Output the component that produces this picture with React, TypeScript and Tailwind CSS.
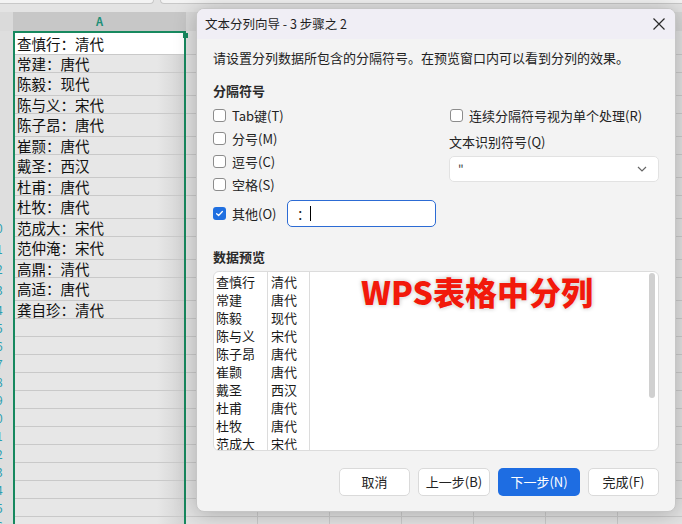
import { ReactNode } from 'react'

const POETS: [string, string][] = [
  ['查慎行', '清代'],
  ['常建', '唐代'],
  ['陈毅', '现代'],
  ['陈与义', '宋代'],
  ['陈子昂', '唐代'],
  ['崔颢', '唐代'],
  ['戴圣', '西汉'],
  ['杜甫', '唐代'],
  ['杜牧', '唐代'],
  ['范成大', '宋代'],
  ['范仲淹', '宋代'],
  ['高鼎', '清代'],
  ['高适', '唐代'],
  ['龚自珍', '清代'],
]

// sheet row heights (first row counts the 2px selection border)
const ROWS: string[] = [
  'h-[24px]',
  'h-[18px]', 'h-[23px]', 'h-[18px]', 'h-[23px]', 'h-[18px]', 'h-[23px]', 'h-[18px]',
  'h-[23px]', 'h-[18px]', 'h-[23px]', 'h-[18px]', 'h-[23px]', 'h-[18px]',
  'h-[18px]', 'h-[18px]', 'h-[18px]', 'h-[18px]', 'h-[18px]', 'h-[18px]',
  'h-[18px]', 'h-[18px]', 'h-[18px]', 'h-[18px]', 'h-[18px]', 'h-[18px]',
]
const COL_A_ROWS = ['h-[22px]', ...ROWS.slice(1)]

function Check({ checked = false }: { checked?: boolean }) {
  return checked ? (
    <span className="flex h-[13px] w-[13px] shrink-0 items-center justify-center rounded-[3px] bg-[#1f6fe0]">
      <svg viewBox="0 0 10 10" className="h-[9px] w-[9px]">
        <path d="M1.8 5.2 L4 7.2 L8.2 2.8" fill="none" stroke="#fff" strokeWidth="1.4" strokeLinecap="round" strokeLinejoin="round" />
      </svg>
    </span>
  ) : (
    <span className="h-[13px] w-[13px] shrink-0 rounded-[3px] border border-[#8c8c8c] bg-white" />
  )
}

function Option({ label, checked }: { label: string; checked?: boolean }) {
  return (
    <div className="flex h-[23px] items-center gap-[6px]">
      <Check checked={checked} />
      <span>{label}</span>
    </div>
  )
}

function Btn({ children, primary, w }: { children: ReactNode; primary?: boolean; w: string }) {
  return (
    <button
      className={`${w} h-[28px] rounded-[5px] text-[13px] ${primary ? 'bg-[#1e6de2] text-white' : 'border border-[#dadada] bg-white text-[#222]'}`}
    >
      {children}
    </button>
  )
}

function Sheet() {
  return (
    <div className="flex flex-col">
      {/* strip above the grid */}
      <div className="flex h-[12px] gap-[6px] bg-[#e3e3e3]">
        <div className="h-[4px] w-[154px] rounded-br-[6px] border-b border-r border-[#c8c8c8] bg-[#f3f3f3]" />
        <div className="h-[4px] flex-1 rounded-bl-[6px] border-b border-l border-[#c8c8c8] bg-[#f3f3f3]" />
      </div>
      <div className="flex">
        {/* row numbers */}
        <div className="flex w-[13px] shrink-0 flex-col bg-[#dedede]">
          <div className="h-[19px] bg-[#dadada]" />
          {ROWS.map((h, i) => (
            <div key={i} className={`${h} flex w-[34px] -ml-[21px] items-center justify-center text-[12px] text-[#2b9fb0]`}>
              {i + 1}
            </div>
          ))}
        </div>
        {/* column A */}
        <div className="flex w-[173px] shrink-0 flex-col">
          <div className="flex h-[19px] items-center justify-center bg-[#c7c7c7] text-[11px] font-semibold text-[#1c8f77]">A</div>
          <div className="relative flex flex-col border-x-2 border-t-2 border-[#17895f]">
            {COL_A_ROWS.map((h, i) => (
              <div
                key={i}
                className={`${h} flex items-center border-b border-[#c9c9c9] pl-[2px] text-[14.5px] text-[#111] ${i === 0 ? 'bg-white' : 'bg-[linear-gradient(to_right,#e7e7e7_84%,#d4d4d4)]'}`}
              >
                {POETS[i] ? `${POETS[i][0]}：${POETS[i][1]}` : ''}
              </div>
            ))}
            <span className="absolute -right-[4px] top-0 h-[5px] w-[5px] bg-[#17895f]" />
          </div>
        </div>
        {/* columns B … */}
        {Array.from({ length: 7 }).map((_, c) => (
          <div key={c} className="flex w-[72px] shrink-0 flex-col">
            <div className="h-[19px] border-r border-[#c4c4c4] bg-[#d8d8d8]" />
            {ROWS.map((h, i) => (
              <div key={i} className={`${h} border-b border-r border-[#cbcbcb] bg-[#e3e3e3]`} />
            ))}
          </div>
        ))}
      </div>
    </div>
  )
}

function Dialog() {
  return (
    <div className="absolute left-[196px] top-[8px] flex h-[504px] w-[480px] flex-col overflow-hidden rounded-[8px] border border-[#c6c6c6] bg-[#f3f3f3] shadow-[0_2px_22px_rgba(0,0,0,0.25)]">
      {/* title bar */}
      <div className="flex h-[30px] shrink-0 items-center justify-between bg-[#f0eef5] pl-[8px] pr-[9px]">
        <span className="text-[12.5px] text-[#1f1f1f]">文本分列向导 - 3 步骤之 2</span>
        <svg viewBox="0 0 14 14" className="h-[14px] w-[14px]">
          <path d="M1.5 1.5 L12.5 12.5 M12.5 1.5 L1.5 12.5" stroke="#2a2a2a" strokeWidth="1.2" />
        </svg>
      </div>

      <div className="flex flex-1 flex-col px-[16px] text-[13px] text-[#222]">
        <p className="mt-[9px] h-[20px] leading-[20px]">请设置分列数据所包含的分隔符号。在预览窗口内可以看到分列的效果。</p>

        <p className="mt-[13px] h-[20px] font-bold leading-[20px] text-[#2a2a2a]">分隔符号</p>

        <div className="mt-[3px] flex">
          <div className="flex w-[236px] shrink-0 flex-col">
            <Option label="Tab键(T)" />
            <Option label="分号(M)" />
            <Option label="逗号(C)" />
            <Option label="空格(S)" />
            <div className="mt-[4px] flex h-[27px] items-center">
              <div className="flex w-[74px] items-center gap-[6px]">
                <Check checked />
                <span>其他(O)</span>
              </div>
              <div className="flex h-[27px] w-[149px] items-center rounded-[5px] border border-[#2c6bd4] bg-white pl-[9px]">
                <span>：</span>
                <span className="h-[15px] w-px bg-black" />
              </div>
            </div>
          </div>
          <div className="flex flex-1 flex-col">
            <div className="pl-[1px]">
              <Option label="连续分隔符号视为单个处理(R)" />
            </div>
            <p className="mt-[5px] h-[20px] leading-[20px]">文本识别符号(Q)</p>
            <div className="mt-[4px] flex h-[26px] items-center justify-between rounded-[5px] border border-[#e2e2e2] bg-white pl-[8px] pr-[11px]">
              <span className="text-[12px] text-[#444]">"</span>
              <svg viewBox="0 0 10 6" className="h-[6px] w-[10px]">
                <path d="M1 1 L5 5 L9 1" fill="none" stroke="#666" strokeWidth="1.2" />
              </svg>
            </div>
          </div>
        </div>

        <p className="mt-[20px] h-[20px] font-bold leading-[20px] text-[#2a2a2a]">数据预览</p>

        <div className="relative mt-[4px] flex h-[180px] overflow-hidden rounded-[6px] border border-[#dcdcdc] bg-white text-[#1a1a1a]">
          <div className="flex w-[54px] shrink-0 flex-col border-r border-[#dcdcdc] pl-[2px] pt-[1px]">
            {POETS.slice(0, 10).map(([n]) => (
              <div key={n} className="h-[18px] leading-[18px]">{n}</div>
            ))}
          </div>
          <div className="flex w-[42px] shrink-0 flex-col border-r border-[#dcdcdc] pl-[3px] pt-[1px]">
            {POETS.slice(0, 10).map(([n, d]) => (
              <div key={n} className="h-[18px] leading-[18px]">{d}</div>
            ))}
          </div>
          <div className="absolute left-[147px] top-[1px] text-[32px] font-black leading-[36px] text-[#f2190b] [text-shadow:0_0_2px_#fff,0_0_4px_rgba(0,0,0,0.3)]">
            WPS表格中分列
          </div>
          <span className="absolute right-[3px] top-[1px] h-[125px] w-[6px] rounded-full bg-[#d0d0d0]" />
        </div>

        <div className="mt-[17px] flex justify-end gap-[8px]">
          <Btn w="w-[71px]">取消</Btn>
          <Btn w="w-[72px]">上一步(B)</Btn>
          <Btn w="w-[82px]" primary>下一步(N)</Btn>
          <Btn w="w-[71px]">完成(F)</Btn>
        </div>
      </div>
    </div>
  )
}

export default function App() {
  return (
    <div className="relative h-[524px] w-[682px] overflow-hidden bg-[#e3e3e3] font-['Noto_Sans_CJK_SC','Noto_Sans',sans-serif]">
      <Sheet />
      <Dialog />
    </div>
  )
}
